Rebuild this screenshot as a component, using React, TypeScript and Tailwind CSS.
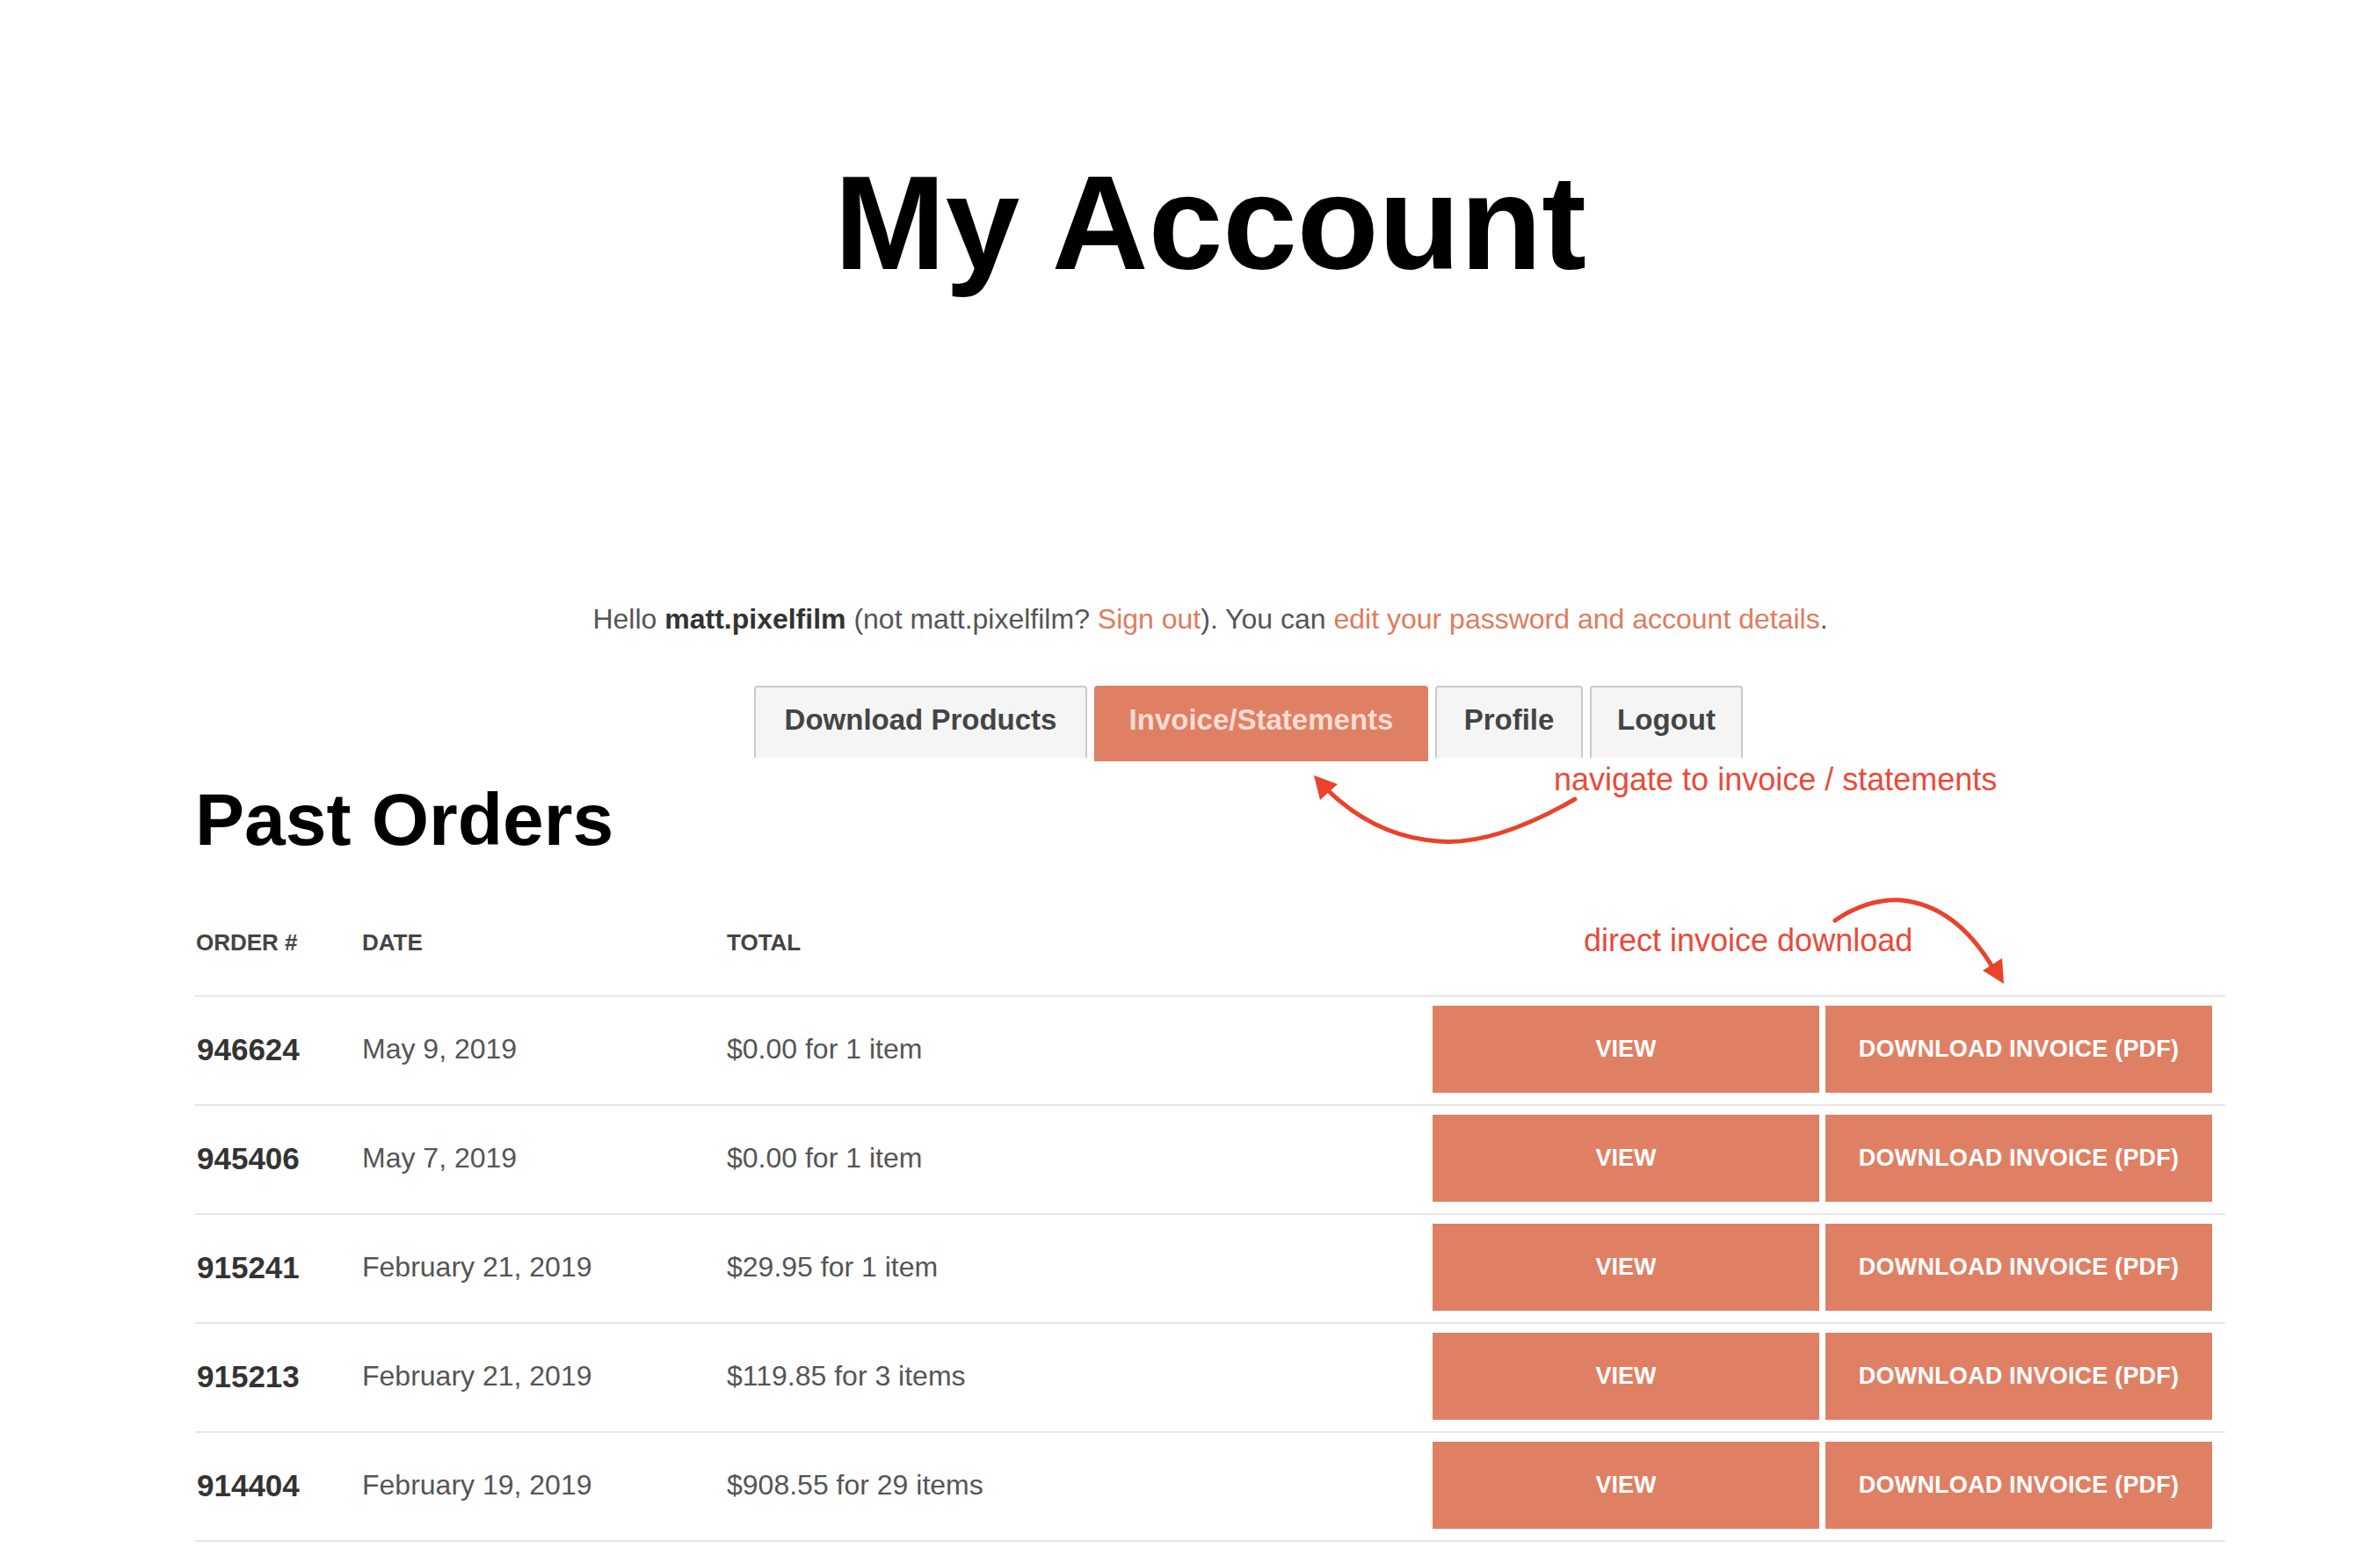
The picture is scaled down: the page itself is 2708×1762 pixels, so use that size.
import React from "react";

type Order = {
  id: string;
  date: string;
  total: string;
};

const orders: Order[] = [
  { id: "946624", date: "May 9, 2019", total: "$0.00 for 1 item" },
  { id: "945406", date: "May 7, 2019", total: "$0.00 for 1 item" },
  { id: "915241", date: "February 21, 2019", total: "$29.95 for 1 item" },
  { id: "915213", date: "February 21, 2019", total: "$119.85 for 3 items" },
  { id: "914404", date: "February 19, 2019", total: "$908.55 for 29 items" },
];

const tabs = [
  { title: "Download Products", width: "w-[379px]", active: false },
  { title: "Invoice/Statements", width: "w-[380px]", active: true },
  { title: "Profile", width: "w-[168px]", active: false },
  { title: "Logout", width: "w-[174px]", active: false },
];

const sans = "font-['Liberation_Sans',Arial,sans-serif]";

const Annotations = () => {
  return (
    <>
      <svg
        className="absolute left-0 top-0 pointer-events-none"
        width={2708}
        height={1762}
        viewBox="0 0 2708 1762">
        {/* arrow to tab */}
        <path
          d="M1792 909 Q1700 962 1637 957 Q1566 952 1512 900"
          fill="none"
          stroke="#e9432b"
          strokeWidth={5}
          strokeLinecap="round"
        />
        <polygon points="1495,882 1502,910 1522,892" fill="#e9432b" />

        {/* arrow to download */}
        <path
          d="M2088 1047 Q2125 1022 2163 1024 Q2225 1030 2267 1100"
          fill="none"
          stroke="#e9432b"
          strokeWidth={5}
          strokeLinecap="round"
        />
        <polygon points="2280,1119 2256,1104 2278,1090" fill="#e9432b" />
      </svg>

      <span
        className={`absolute left-[1768px] top-[869px] text-[36px] leading-none text-[#ea4a3a] whitespace-nowrap ${sans}`}>
        navigate to invoice / statements
      </span>
      <span
        className={`absolute left-[1802px] top-[1052px] text-[36px] leading-none text-[#ea4a3a] whitespace-nowrap ${sans}`}>
        direct invoice download
      </span>
    </>
  );
};

const App = () => {
  return (
    <div className={`relative w-full h-[1762px] bg-white overflow-hidden ${sans}`}>
      <div className="ml-[222px] w-[2310px] flex flex-col">
        {/* title */}
        <h1 className="mt-[177px] text-center text-[152px] leading-none font-bold text-black">
          My Account
        </h1>

        <p className="mt-[359px] text-center text-[32px] leading-none text-[#555]">
          Hello <strong className="font-bold text-[#333]">matt.pixelfilm</strong> (not
          matt.pixelfilm? <span className="text-[#e07b5e]">Sign out</span>). You can{" "}
          <span className="text-[#e07b5e]">edit your password and account details</span>.
        </p>

        {/* tabs */}
        <nav className="mt-[60px] ml-[636px] flex items-start gap-[8px] h-[86px]">
          {tabs.map((tab) =>
            tab.active ? (
              <div
                key={tab.title}
                className={`${tab.width} h-[86px] pt-[22px] rounded-t-[4px] bg-[#df8064] text-center text-[33px] leading-none font-bold text-[#fbdcd2]`}>
                {tab.title}
              </div>
            ) : (
              <div
                key={tab.title}
                className={`${tab.width} h-[82px] pt-[20px] rounded-t-[4px] border-2 border-b-0 border-[#cacaca] bg-[#f5f5f5] text-center text-[33px] leading-none font-bold text-[#444]`}>
                {tab.title}
              </div>
            )
          )}
        </nav>

        <h2 className="mt-[24px] text-[84px] leading-none font-bold text-black">Past Orders</h2>

        {/* table */}
        <div className="mt-[85px] grid grid-cols-[190px_415px_1fr_902px] pb-[47px] border-b-2 border-[#e6e6e6] text-[26px] leading-none font-bold text-[#444]">
          <span className="pl-[1px]">ORDER #</span>
          <span>DATE</span>
          <span>TOTAL</span>
          <span />
        </div>

        {orders.map((order) => (
          <div
            key={order.id}
            className="h-[124px] pb-[4px] grid grid-cols-[190px_415px_1fr_902px] items-center border-b-2 border-[#e6e6e6]">
            <span className="pl-[2px] text-[35px] leading-none font-bold text-[#333]">{order.id}</span>
            <span className="text-[32px] leading-none text-[#555]">{order.date}</span>
            <span className="text-[32px] leading-none text-[#555]">{order.total}</span>
            <div className="flex gap-[7px] pr-[15px]">
              <button className="w-[440px] h-[99px] bg-[#df8064] text-white text-[27px] font-bold leading-none">
                VIEW
              </button>
              <button className="w-[440px] h-[99px] bg-[#df8064] text-white text-[27px] font-bold leading-none tracking-[0.2px]">
                DOWNLOAD INVOICE (PDF)
              </button>
            </div>
          </div>
        ))}
      </div>

      <Annotations />
    </div>
  );
};

export default App;
